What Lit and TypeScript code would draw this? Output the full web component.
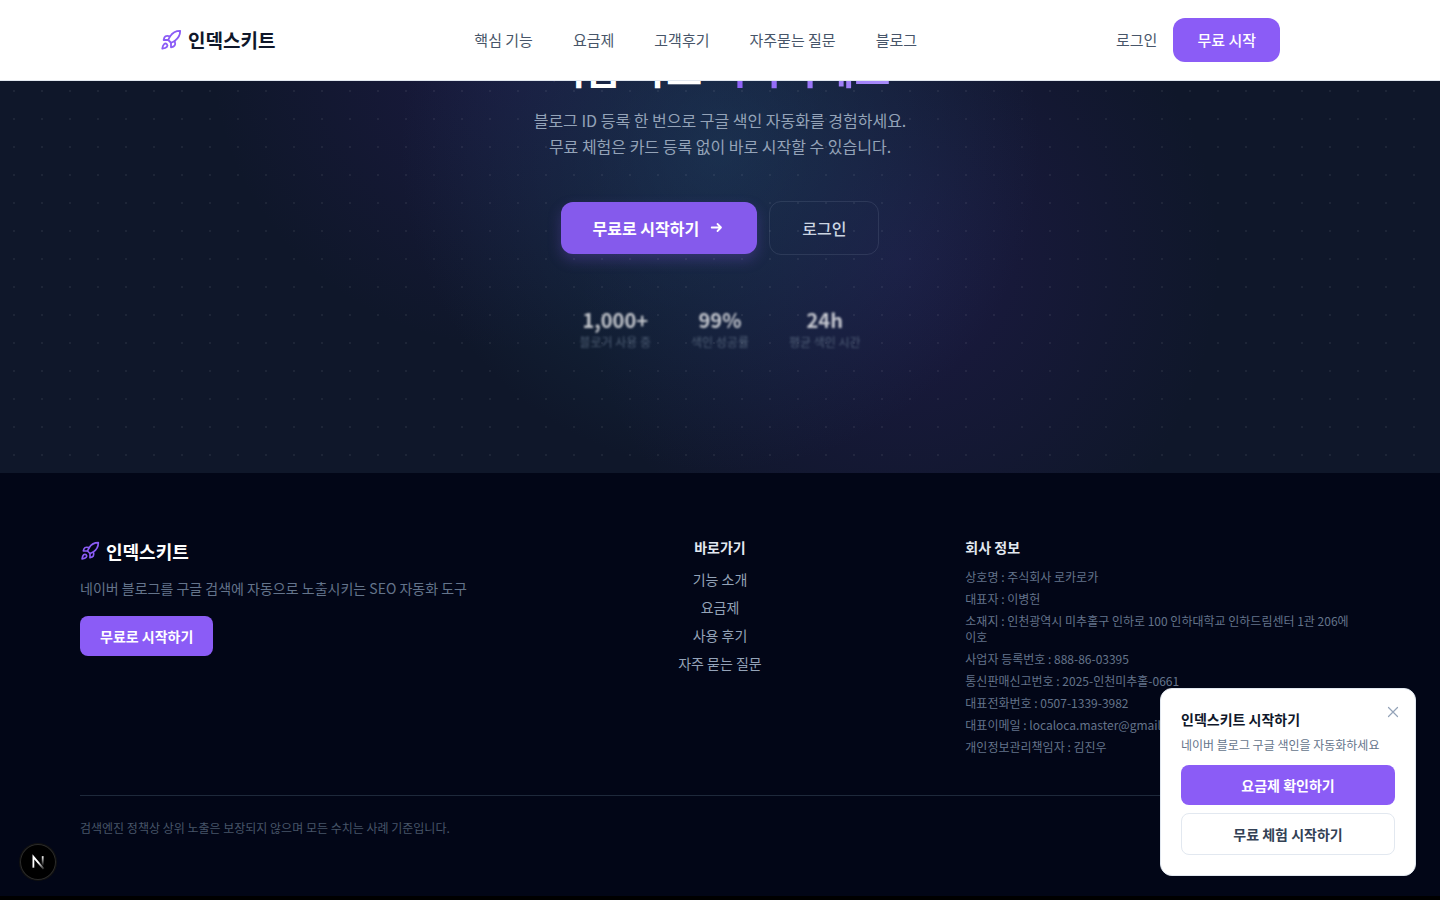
import { LitElement, html, css, svg } from "lit";
import { customElement, state } from "lit/decorators.js";

const rocketPaths = svg`
  <path d="M4.5 16.5c-1.5 1.26-2 5-2 5s3.74-.5 5-2c.71-.84.7-2.13-.09-2.91a2.18 2.18 0 0 0-2.91-.09z"></path>
  <path d="m12 15-3-3a22 22 0 0 1 2-3.95A12.88 12.88 0 0 1 22 2c0 2.72-.78 7.5-6 11a22.35 22.35 0 0 1-4 2z"></path>
  <path d="M9 12H4s.55-3.03 2-4c1.62-1.08 5 0 5 0"></path>
  <path d="M12 15v5s3.03-.55 4-2c1.08-1.62 0-5 0-5"></path>`;

const rocket = (size: number) => html`<svg
  class="rocket" width=${size} height=${size} viewBox="0 0 24 24" fill="none"
  stroke="currentColor" stroke-width="2" stroke-linecap="round" stroke-linejoin="round"
  aria-hidden="true">${rocketPaths}</svg>`;

const NAV = ["핵심 기능", "요금제", "고객후기", "자주묻는 질문", "블로그"];
const STATS = [
  ["1,000+", "블로거 사용 중"],
  ["99%", "색인 성공률"],
  ["24h", "평균 색인 시간"],
];
const LINKS = ["기능 소개", "요금제", "사용 후기", "자주 묻는 질문"];
const COMPANY = [
  "상호명 : 주식회사 로카로카",
  "대표자 : 이병헌",
  "소재지 : 인천광역시 미추홀구 인하로 100 인하대학교 인하드림센터 1관 206에이호",
  "사업자 등록번호 : 888-86-03395",
  "통신판매신고번호 : 2025-인천미추홀-0661",
  "대표전화번호 : 0507-1339-3982",
  "대표이메일 : localoca.master@gmail.com",
  "개인정보관리책임자 : 김진우",
];

@customElement("app-root")
export class AppRoot extends LitElement {
  @state() private promoOpen = true;

  static styles = css`
    :host {
      display: block;
      min-height: 100vh;
      background: #000;
      font-family: "Noto Sans CJK KR", "Noto Sans", sans-serif;
      color: #0f172a;
    }
    * { box-sizing: border-box; margin: 0; }
    a { color: inherit; text-decoration: none; }
    button { font: inherit; border: 0; cursor: pointer; }
    ul { list-style: none; padding: 0; }
    svg { display: block; flex: none; }
    .rocket { color: #8b5cf6; }

    .header {
      position: fixed;
      inset: 0 0 auto;
      z-index: 10;
      background: #fff;
      border-bottom: 1px solid #e2e8f0;
    }
    .header-inner {
      max-width: 1120px;
      height: 80px;
      margin: 0 auto;
      display: flex;
      align-items: center;
      justify-content: space-between;
    }
    .logo { display: flex; align-items: center; gap: 6px; font-weight: 700; }
    .header .logo { font-size: 19px; line-height: 26px; }
    .nav { display: flex; gap: 40px; font-size: 15px; line-height: 22px; color: #475569; }
    .actions { display: flex; align-items: center; gap: 16px; font-size: 15px; line-height: 22px; color: #475569; }
    .btn {
      display: inline-flex;
      align-items: center;
      justify-content: center;
      background: #8b5cf6;
      color: #fff;
      font-weight: 600;
    }
    .header .btn { padding: 11px 24px; border-radius: 12px; font-weight: 500; }

    .hero {
      padding: 43px 24px 123px;
      text-align: center;
      background:
        radial-gradient(circle at 14px 14px, rgba(255, 255, 255, 0.06) 1px, transparent 1px) 0 21px / 28px 28px,
        radial-gradient(ellipse 320px 320px at 50% 150px, rgba(30, 70, 100, 0.5), transparent),
        radial-gradient(ellipse 310px 300px at calc(50% - 200px) 50px, rgba(67, 35, 140, 0.22), transparent),
        radial-gradient(ellipse 320px 340px at calc(50% + 180px) 260px, rgba(67, 35, 140, 0.24), transparent),
        #0f172a;
    }
    .hero h1 { font-size: 39px; line-height: 48px; font-weight: 700; color: #fff; }
    .accent {
      background: linear-gradient(90deg, #8b5cf6, #a78bfa);
      -webkit-background-clip: text;
      background-clip: text;
      color: transparent;
    }
    .lead { margin-top: 16px; font-size: 16px; line-height: 26px; color: #94a3b8; }
    .cta { display: flex; justify-content: center; align-items: center; gap: 12px; margin-top: 42px; font-size: 16px; line-height: 24px; }
    .cta .btn { padding: 14px 32px; gap: 10px; border-radius: 12px; background: #855aec; box-shadow: 0 6px 14px rgba(139, 92, 246, 0.25); }
    .ghost { padding: 14px 32px; border: 1px solid rgba(148, 163, 184, 0.16); border-radius: 12px; color: #cbd5e1; font-weight: 500; }
    .stats { display: flex; justify-content: center; gap: 40px; margin-top: 51px; filter: blur(1px); opacity: 0.75; }
    .stat-value { font-size: 20px; line-height: 28px; font-weight: 700; color: #fff; }
    .stat-label { font-size: 12px; line-height: 16px; color: #64748b; }

    .footer { background: #020617; padding: 64px 80px 60px; }
    .columns { display: grid; grid-template-columns: repeat(3, minmax(0, 1fr)); gap: 48px; }
    .brand { display: flex; flex-direction: column; align-items: flex-start; }
    .brand .logo { font-size: 18px; line-height: 28px; color: #fff; }
    .brand-text { margin: 12px 0 16px; font-size: 14px; line-height: 23px; color: #64748b; }
    .brand .btn, .promo .btn { padding: 10px 20px; border-radius: 8px; font-size: 14px; line-height: 20px; }
    .columns h2 { font-size: 14px; line-height: 20px; font-weight: 600; color: #e2e8f0; margin-bottom: 12px; }
    .links { text-align: center; }
    .links ul { display: grid; gap: 8px; font-size: 14px; line-height: 20px; color: #94a3b8; }
    .company ul { display: grid; gap: 6px; padding-right: 8px; font-size: 12px; line-height: 16px; color: #64748b; }
    .note { margin-top: 40px; padding-top: 24px; border-top: 1px solid #1e293b; font-size: 12px; line-height: 16px; color: #475569; }

    .promo {
      position: fixed;
      right: 24px;
      bottom: 24px;
      z-index: 20;
      width: 256px;
      padding: 20px;
      display: flex;
      flex-direction: column;
      background: #fff;
      border: 1px solid #e2e8f0;
      border-radius: 12px;
    }
    .promo h2 { font-size: 14px; line-height: 20px; font-weight: 600; }
    .promo p { margin: 8px 0 12px; font-size: 12px; line-height: 16px; color: #64748b; }
    .promo .outline { margin-top: 8px; background: #fff; border: 1px solid #e2e8f0; color: #334155; }
    .close { position: absolute; top: 15px; right: 14px; padding: 0; background: none; color: #94a3b8; }

    .dev {
      position: fixed;
      left: 20px;
      bottom: 20px;
      z-index: 20;
      width: 36px;
      height: 36px;
      padding: 0;
      display: grid;
      place-items: center;
      border-radius: 50%;
      background: #000;
      box-shadow: inset 0 0 0 1px #2b2b2b, 0 0 0 1px #111;
    }
  `;

  render() {
    return html`
      <header class="header">
        <div class="header-inner">
          <a class="logo" href="#">${rocket(22)}<span>인덱스키트</span></a>
          <nav class="nav">${NAV.map((t) => html`<a href="#">${t}</a>`)}</nav>
          <div class="actions">
            <a href="#">로그인</a>
            <a class="btn" href="#">무료 시작</a>
          </div>
        </div>
      </header>

      <section class="hero">
        <h1>지금 바로 <span class="accent">시작하세요</span></h1>
        <p class="lead">
          블로그 ID 등록 한 번으로 구글 색인 자동화를 경험하세요.<br />
          무료 체험은 카드 등록 없이 바로 시작할 수 있습니다.
        </p>
        <div class="cta">
          <a class="btn" href="#">무료로 시작하기
            <svg width="16" height="16" viewBox="0 0 16 16" fill="none" stroke="currentColor"
              stroke-width="1.8" stroke-linecap="round" stroke-linejoin="round" aria-hidden="true">
              <path d="M2.7 7.5h9.3M8.5 4l3.5 3.5L8.5 11"></path>
            </svg>
          </a>
          <a class="ghost" href="#">로그인</a>
        </div>
        <div class="stats">
          ${STATS.map(([v, l]) => html`<div>
            <div class="stat-value">${v}</div>
            <div class="stat-label">${l}</div>
          </div>`)}
        </div>
      </section>

      <footer class="footer">
        <div class="columns">
          <div class="brand">
            <a class="logo" href="#">${rocket(20)}<span>인덱스키트</span></a>
            <p class="brand-text">네이버 블로그를 구글 검색에 자동으로 노출시키는 SEO 자동화 도구</p>
            <a class="btn" href="#">무료로 시작하기</a>
          </div>
          <nav class="links">
            <h2>바로가기</h2>
            <ul>${LINKS.map((t) => html`<li><a href="#">${t}</a></li>`)}</ul>
          </nav>
          <div class="company">
            <h2>회사 정보</h2>
            <ul>${COMPANY.map((t) => html`<li>${t}</li>`)}</ul>
          </div>
        </div>
        <p class="note">검색엔진 정책상 상위 노출은 보장되지 않으며 모든 수치는 사례 기준입니다.</p>
      </footer>

      ${this.promoOpen
        ? html`<aside class="promo">
            <button class="close" aria-label="닫기" @click=${() => (this.promoOpen = false)}>
              <svg width="16" height="16" viewBox="0 0 16 16" fill="none" stroke="currentColor"
                stroke-width="1.2" stroke-linecap="round">
                <path d="M3.5 3.5l9 9M12.5 3.5l-9 9"></path>
              </svg>
            </button>
            <h2>인덱스키트 시작하기</h2>
            <p>네이버 블로그 구글 색인을 자동화하세요</p>
            <a class="btn" href="#">요금제 확인하기</a>
            <a class="btn outline" href="#">무료 체험 시작하기</a>
          </aside>`
        : null}

      <button class="dev" aria-label="Next.js">
        <svg width="14" height="16" viewBox="0 0 14 16" fill="none" stroke-width="1.8">
          <defs>
            <linearGradient id="n-diagonal" gradientUnits="userSpaceOnUse" x1="8" y1="8" x2="12.5" y2="14.5">
              <stop stop-color="#fff"></stop>
              <stop offset="1" stop-color="#fff" stop-opacity="0.2"></stop>
            </linearGradient>
            <linearGradient id="n-stem" gradientUnits="userSpaceOnUse" x1="11.8" y1="2" x2="11.9" y2="12">
              <stop stop-color="#fff"></stop>
              <stop offset="1" stop-color="#fff" stop-opacity="0"></stop>
            </linearGradient>
          </defs>
          <path d="M12.6 14.8 2.4 2.8v11" stroke="url(#n-diagonal)"></path>
          <path d="M11.7 2.2v10" stroke="url(#n-stem)"></path>
        </svg>
      </button>
    `;
  }
}
